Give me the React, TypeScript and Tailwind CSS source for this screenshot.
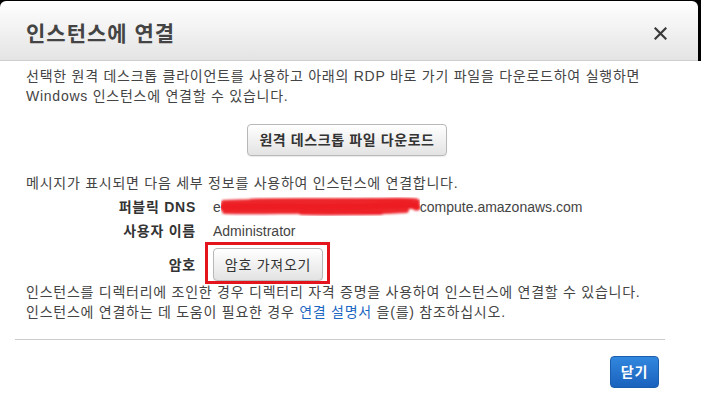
const font = { fontFamily: '"Liberation Sans", "Noto Sans CJK KR", sans-serif' };

function CloseIcon() {
  return (
    <svg width="13" height="13" viewBox="0 0 13 13" className="block">
      <path d="M1.5 1.5 L11.5 11.5 M11.5 1.5 L1.5 11.5" stroke="#3a3a3a" strokeWidth="2.2" strokeLinecap="square" />
    </svg>
  );
}

function Scribble() {
  return (
    <svg width="199" height="19" viewBox="0 0 199 19" className="inline-block align-[-4px]">
      <defs>
        <filter id="soft" x="-5%" y="-30%" width="110%" height="160%">
          <feGaussianBlur stdDeviation="0.8" />
        </filter>
      </defs>
      <g filter="url(#soft)" stroke="#ec1c24" strokeLinecap="round" fill="none">
        <path d="M3 6 C40 4, 90 5, 150 4 S190 5, 196 5" strokeWidth="6" opacity="0.95" />
        <path d="M2 10 C50 9, 110 11, 160 9 S190 10, 196 10" strokeWidth="7" />
        <path d="M4 14 C40 15, 80 13, 120 14 S160 14, 185 13" strokeWidth="6" opacity="0.95" />
        <path d="M80 16 C110 17, 130 16, 160 16" strokeWidth="4" opacity="0.85" />
        <path d="M30 3 C90 2, 150 3, 190 3" strokeWidth="3" opacity="0.7" />
      </g>
    </svg>
  );
}

export default function App() {
  return (
    <div className="w-[701px] h-[410px] bg-black pt-px overflow-hidden text-[14px] tracking-[0.75px] text-[#444]" style={font}>
      <div className="w-[698px] h-[60px] rounded-t-[6px] bg-gradient-to-b from-white to-[#e4e4e4] border-b border-[#cfcfcf] flex items-center justify-between pl-[26px] pr-[31px] pt-[5px]">
        <h1 className="text-[21px] tracking-[1px] font-bold text-[#444] leading-none">인스턴스에 연결</h1>
        <CloseIcon />
      </div>

      <div className="bg-white h-[349px]">
        <div className="pl-[26px] pr-[33px] pt-[5px] leading-[20px]">
          <p>
            선택한 원격 데스크톱 클라이언트를 사용하고 아래의 RDP 바로 가기 파일을 다운로드하여 실행하면
            <br />
            Windows 인스턴스에 연결할 수 있습니다.
          </p>

          <div className="flex justify-center mt-[18px]">
            <button className="w-[200px] h-[32px] rounded-[4px] border border-[#b8b8b8] bg-gradient-to-b from-white to-[#e3e3e3] font-bold text-[#333] tracking-[0.6px] shadow-[0_1px_1px_rgba(0,0,0,0.08)]">
              원격 데스크톱 파일 다운로드
            </button>
          </div>

          <p className="mt-[17px]">메시지가 표시되면 다음 세부 정보를 사용하여 인스턴스에 연결합니다.</p>

          <div className="flex items-center mt-[4px]">
            <span className="w-[170px] text-right font-bold text-[#333]">퍼블릭 DNS</span>
            <span className="ml-[17px] whitespace-nowrap tracking-normal">
              e<Scribble />compute.amazonaws.com
            </span>
          </div>
          <div className="flex items-center mt-[4px]">
            <span className="w-[170px] text-right font-bold text-[#333]">사용자 이름</span>
            <span className="ml-[17px] tracking-normal">Administrator</span>
          </div>
          <div className="flex items-center mt-[7px]">
            <span className="w-[170px] text-right font-bold text-[#333]">암호</span>
            <div className="relative ml-[17px]">
              <button className="w-[110px] h-[33px] rounded-[4px] border border-[#b8b8b8] bg-gradient-to-b from-white to-[#e3e3e3] text-[#333] shadow-[0_1px_1px_rgba(0,0,0,0.08)]">
                암호 가져오기
              </button>
              <div className="absolute left-[-8px] top-[-6px] w-[125px] h-[42px] border-[3px] border-[#e3141b] pointer-events-none" />
            </div>
          </div>

          <p className="mt-[1px]">
            인스턴스를 디렉터리에 조인한 경우 디렉터리 자격 증명을 사용하여 인스턴스에 연결할 수 있습니다.
            <br />
            인스턴스에 연결하는 데 도움이 필요한 경우 <span className="text-[#1a66c2]">연결 설명서</span> 을(를) 참조하십시오.
          </p>
        </div>

        <div className="ml-[15px] w-[650px] border-t border-[#cccccc] mt-[17px]" />

        <div className="pl-[610px] mt-[16px]">
          <button className="w-[49px] h-[32px] rounded-[4px] border border-[#1b5eab] bg-gradient-to-b from-[#3287de] to-[#1a62bd] text-white font-bold">
            닫기
          </button>
        </div>
      </div>
    </div>
  );
}
